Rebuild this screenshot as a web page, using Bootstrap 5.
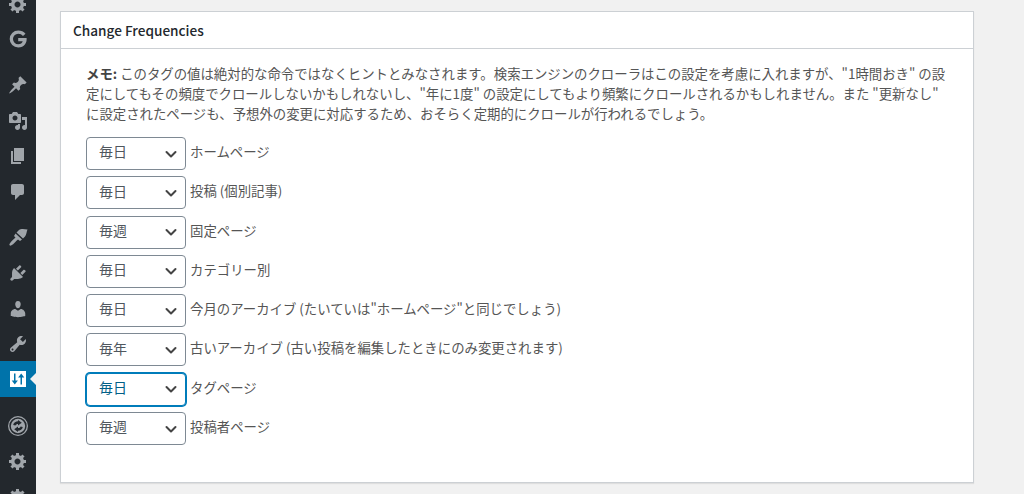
<!DOCTYPE html>
<html lang="ja">
<head>
  <meta charset="UTF-8" />
  <meta name="viewport" content="width=device-width, initial-scale=1.0" />
  <title>Change Frequencies</title>
  <link href="https://cdn.jsdelivr.net/npm/bootstrap@5.3.0/dist/css/bootstrap.min.css" rel="stylesheet" />
  <style>
    html, body { height: 100%; }
    body {
      background-color: #f1f1f1;
      color: #555;
      font-family: "Noto Sans CJK JP", "Noto Sans", sans-serif;
      font-size: 13px;
      overflow: hidden;
    }
    .wp-shell { height: 494px; overflow: hidden; }
    .wp-side {
      width: 36px;
      flex: none;
      background: #23282d;
      overflow: hidden;
    }
    .wp-menu { margin-top: -14px; }
    .wp-item {
      height: 35.6px;
      display: flex;
      align-items: center;
      justify-content: center;
      color: #a0a5aa;
    }
    .wp-item svg { width: 20px; height: 20px; fill: currentColor; }
    .wp-gap { height: 10px; }
    .wp-item.is-on {
      height: 36px;
      margin-top: -1px;
      margin-bottom: 1px;
      background: #0073aa;
      color: #fff;
      position: relative;
    }
    .wp-item.is-on::after {
      content: "";
      position: absolute;
      right: 0;
      top: 12px;
      border: 6px solid transparent;
      border-right-color: #f1f1f1;
      border-left-width: 0;
    }
    .wp-main { padding: 11px 50px 0 24px; flex: 1; min-width: 0; }
    .fq-panel {
      height: 472px;
      background: #fff;
      border: 1px solid #ccd0d4;
      box-shadow: 0 1px 1px rgba(0, 0, 0, .08);
    }
    .fq-head {
      height: 37px;
      margin: 0;
      padding: 2px 12px 0;
      display: flex;
      align-items: center;
      border-bottom: 1px solid #ccd0d4;
      font-size: 13.6px;
      font-weight: 500;
      color: #23282d;
      line-height: 1;
    }
    .fq-body { padding: 16px 25px 0; }
    .fq-note { margin: -2px 0 14px; font-size: 13.4px; line-height: 20px; color: #555; }
    .fq-note strong { font-weight: 700; color: #444; }
    .fq-row { height: 33px; margin-bottom: 6.3px; gap: 4px; }
    .fq-row label { margin-top: -5px; font-size: 13.4px; color: #555; }
    .fq-select.form-select {
      width: 100px;
      height: 33px;
      padding: 0 24px 3px 12px;
      font-size: 14px;
      line-height: 1.4;
      color: #50575e;
      border: 1px solid #7e8993;
      border-radius: 4px;
      background-position: right 6px center;
      background-size: 16px 16px;
      background-image: url("data:image/svg+xml,%3csvg xmlns='http://www.w3.org/2000/svg' viewBox='0 0 16 16'%3e%3cpath fill='none' stroke='%23444' stroke-linecap='round' stroke-linejoin='round' stroke-width='2' d='m3.500 6 4.500 4.500 4.500-4.500'/%3e%3c/svg%3e");
      box-shadow: none;
    }
    .fq-select.is-focus {
      color: #016087;
      border-color: #007cba;
      box-shadow: 0 0 0 1px #007cba;
    }
  </style>
</head>
<body>
  <div class="wp-shell d-flex">
    <nav class="wp-side">
      <div class="wp-menu">
        <div class="wp-item"><svg viewBox="0 0 20 20"><path d="M18 12h-2.180c-.17.7-.44 1.350-.81 1.930l1.540 1.540-2.100 2.100-1.540-1.540c-.58.36-1.230.63-1.910.79V19H8v-2.180c-.68-.16-1.330-.43-1.910-.79l-1.540 1.540-2.120-2.120 1.540-1.540c-.36-.58-.63-1.230-.79-1.910H1V9h2.170c.16-.7.440-1.350.8-1.940L2.430 5.520l2.100-2.100 1.540 1.540c.58-.37 1.240-.64 1.930-.81V2h3v2.180c.68.16 1.330.43 1.910.79l1.540-1.540 2.120 2.120-1.540 1.540c.36.59.640 1.240.8 1.910H18v3zm-8.500 1.500c1.660 0 3-1.340 3-3s-1.340-3-3-3-3 1.340-3 3 1.340 3 3 3z"/></svg></div>
        <div class="wp-item"><svg viewBox="0 0 20 20"><path d="M17.500 4.700 15 7a6 6 0 0 0-4.800-2.200 5.200 5.200 0 0 0 0 10.400c2.400 0 4-1.100 4.500-3h-4.500V9h8.400c.6 4.800-2.300 9.500-8.400 9.500a8.500 8.500 0 1 1 0-17c3 0 5.500 1.200 7.300 3.200z"/></svg></div>
        <div class="wp-gap"></div>
        <div class="wp-item"><svg viewBox="0 0 20 20"><path d="M10.440 3.020l1.820-1.820 6.360 6.350-1.830 1.820c-1.050-.68-2.480-.57-3.410.36l-.75.75c-.92.93-1.040 2.350-.35 3.410l-1.830 1.820-2.410-2.410-2.800 2.790c-.42.42-3.380 2.710-3.800 2.290s1.860-3.390 2.280-3.810l2.790-2.790L4.100 9.360l1.830-1.820c1.050.69 2.480.57 3.400-.36l.75-.75c.93-.92 1.050-2.350.36-3.410z"/></svg></div>
        <div class="wp-item"><svg viewBox="0 0 20 20"><path d="M13 11V4c0-.55-.45-1-1-1h-1.670L9 1H5L3.670 3H2c-.55 0-1 .45-1 1v7c0 .55.45 1 1 1h10c.55 0 1-.45 1-1zM7 4.500c1.380 0 2.500 1.120 2.500 2.500S8.380 9.500 7 9.500 4.500 8.380 4.500 7 5.620 4.500 7 4.500zM14 6h5v10.500c0 1.380-1.120 2.500-2.500 2.500S14 17.880 14 16.500s1.120-2.500 2.500-2.500c.17 0 .34.020.5.050V9h-3V6zm-4 8.050V13h2v3.500c0 1.380-1.120 2.500-2.500 2.500S7 17.880 7 16.500 8.120 14 9.500 14c.17 0 .34.020.5.050z"/></svg></div>
        <div class="wp-item"><svg viewBox="0 0 20 20"><path d="M6 15V2h10v13H6zm-1 1h8v2H3V5h2v11z"/></svg></div>
        <div class="wp-item"><svg viewBox="0 0 20 20"><path d="M5 2h9c1.100 0 2 .9 2 2v7c0 1.100-.9 2-2 2h-2l-5 5v-5H5c-1.100 0-2-.9-2-2V4c0-1.100.9-2 2-2z"/></svg></div>
        <div class="wp-gap"></div>
        <div class="wp-item"><svg viewBox="0 0 20 20"><path d="M11 3C13 1.500 16 2 19.500 2.500 18.500 5 18.500 7.500 17 9.500L15 11.500 8.500 5.500zM7.500 6.500 14 12.500 12 14 10 12.500C8 14 6 17 3 18.500 2 19 1 18 1.500 17 3 14 6 12 7.500 10.500L6 9z"/></svg></div>
        <div class="wp-item"><svg viewBox="0 0 20 20"><path d="M13.110 4.360L9.870 7.600 8 5.730l3.240-3.240c.35-.34 1.050-.2 1.560.32.52.51.66 1.210.31 1.550zm-8 1.770l.91-1.120 9.010 9.010-1.190.84c-.71.71-2.630 1.160-3.820 1.160H6.140L4.900 17.260c-.59.59-1.540.59-2.120 0-.59-.58-.59-1.530 0-2.120l1.240-1.240v-3.880c0-1.130.4-3.190 1.090-3.890zm7.260 3.970l3.240-3.240c.34-.35 1.040-.21 1.550.31.52.51.66 1.210.31 1.550l-3.240 3.250z"/></svg></div>
        <div class="wp-item"><svg viewBox="0 0 20 20"><path d="M10 9.250c-2.270 0-2.730-3.440-2.730-3.440C7 4.020 7.820 2 9.970 2c2.160 0 2.980 2.020 2.710 3.810 0 0-.41 3.440-2.680 3.440zm0 2.570L12.720 10c2.390 0 4.520 2.330 4.520 4.530v2.490s-3.650 1.130-7.240 1.130c-3.650 0-7.240-1.130-7.240-1.130v-2.490c0-2.250 1.940-4.480 4.470-4.480z"/></svg></div>
        <div class="wp-item"><svg viewBox="0 0 20 20"><path d="M16.680 9.770c-1.340 1.340-3.300 1.670-4.950.99l-5.410 6.520c-.99.99-2.590.99-3.580 0s-.99-2.590 0-3.570l6.520-5.420c-.68-1.650-.35-3.610.99-4.950 1.280-1.280 3.120-1.620 4.720-1.060l-2.890 2.890 2.820 2.820 2.860-2.870c.53 1.580.18 3.390-1.080 4.650zM3.810 16.210c.4.39 1.040.39 1.430 0 .4-.4.4-1.040 0-1.430-.39-.4-1.030-.4-1.430 0-.39.39-.39 1.030 0 1.430z"/></svg></div>
        <div class="wp-item is-on"><svg viewBox="0 0 20 20"><path fill-rule="evenodd" d="M2 2h16v16H2zM6 4.500V11.500H3.700L6.800 15.500 9.900 11.500H7.500V4.500zM12.500 15.500h1.500V8.500h2.300L13.200 4.500 10.100 8.500h2.400z"/></svg></div>
        <div class="wp-gap"></div>
        <div class="wp-item"><svg viewBox="0 0 20 20"><path fill-rule="evenodd" d="M10 0a10 10 0 1 1 0 20 10 10 0 0 1 0-20zm0 1.300a8.700 8.700 0 1 0 0 17.400 8.700 8.700 0 0 0 0-17.400zM10 2.800a7.200 7.200 0 1 1 0 14.400 7.200 7.200 0 0 1 0-14.400zM5.200 9C5.700 6.500 7.800 5.300 10 5.300V4l3.800 2.700L10 9.400V8C8.800 8 7.800 8.600 7.400 9.600zM14.800 11C14.300 13.500 12.200 14.700 10 14.700V16L6.200 13.300 10 10.600V12C11.200 12 12.200 11.400 12.600 10.400z"/></svg></div>
        <div class="wp-item"><svg viewBox="0 0 20 20"><path d="M18 12h-2.180c-.17.7-.44 1.350-.81 1.930l1.540 1.540-2.100 2.100-1.540-1.540c-.58.36-1.230.63-1.910.79V19H8v-2.180c-.68-.16-1.330-.43-1.910-.79l-1.540 1.540-2.120-2.120 1.540-1.540c-.36-.58-.63-1.230-.79-1.910H1V9h2.170c.16-.7.440-1.350.8-1.940L2.430 5.520l2.100-2.100 1.540 1.540c.58-.37 1.240-.64 1.930-.81V2h3v2.180c.68.16 1.330.43 1.910.79l1.540-1.540 2.120 2.120-1.540 1.540c.36.59.640 1.240.8 1.910H18v3zm-8.500 1.500c1.660 0 3-1.340 3-3s-1.340-3-3-3-3 1.340-3 3 1.340 3 3 3z"/></svg></div>
        <div class="wp-item"><svg viewBox="0 0 20 20"><path d="M18 12h-2.180c-.17.7-.44 1.350-.81 1.930l1.540 1.540-2.100 2.100-1.540-1.540c-.58.36-1.230.63-1.910.79V19H8v-2.180c-.68-.16-1.330-.43-1.910-.79l-1.540 1.540-2.120-2.120 1.540-1.540c-.36-.58-.63-1.230-.79-1.910H1V9h2.170c.16-.7.440-1.350.8-1.940L2.430 5.520l2.100-2.100 1.540 1.540c.58-.37 1.240-.64 1.930-.81V2h3v2.180c.68.16 1.330.43 1.910.79l1.540-1.540 2.120 2.120-1.540 1.540c.36.59.640 1.240.8 1.910H18v3zm-8.500 1.500c1.660 0 3-1.340 3-3s-1.340-3-3-3-3 1.340-3 3 1.340 3 3 3z"/></svg></div>
      </div>
    </nav>
    <main class="wp-main">
      <section class="fq-panel">
        <h2 class="fq-head">Change Frequencies</h2>
        <div class="fq-body">
          <p class="fq-note"><strong>メモ:</strong> このタグの値は絶対的な命令ではなくヒントとみなされます。検索エンジンのクローラはこの設定を考慮に入れますが、"1時間おき" の設定にしてもその頻度でクロールしないかもしれないし、"年に1度" の設定にしてもより頻繁にクロールされるかもしれません。また "更新なし" に設定されたページも、予想外の変更に対応するため、おそらく定期的にクロールが行われるでしょう。</p>
          <div class="fq-row d-flex align-items-center">
            <select class="form-select fq-select"><option>毎日</option></select><label>ホームページ</label>
          </div>
          <div class="fq-row d-flex align-items-center">
            <select class="form-select fq-select"><option>毎日</option></select><label>投稿 (個別記事)</label>
          </div>
          <div class="fq-row d-flex align-items-center">
            <select class="form-select fq-select"><option>毎週</option></select><label>固定ページ</label>
          </div>
          <div class="fq-row d-flex align-items-center">
            <select class="form-select fq-select"><option>毎日</option></select><label>カテゴリー別</label>
          </div>
          <div class="fq-row d-flex align-items-center">
            <select class="form-select fq-select"><option>毎日</option></select><label>今月のアーカイブ (たいていは"ホームページ"と同じでしょう)</label>
          </div>
          <div class="fq-row d-flex align-items-center">
            <select class="form-select fq-select"><option>毎年</option></select><label>古いアーカイブ (古い投稿を編集したときにのみ変更されます)</label>
          </div>
          <div class="fq-row d-flex align-items-center">
            <select class="form-select fq-select is-focus"><option>毎日</option></select><label>タグページ</label>
          </div>
          <div class="fq-row d-flex align-items-center">
            <select class="form-select fq-select"><option>毎週</option></select><label>投稿者ページ</label>
          </div>
        </div>
      </section>
    </main>
  </div>
  <script src="https://cdn.jsdelivr.net/npm/bootstrap@5.3.0/dist/js/bootstrap.bundle.min.js"></script>
</body>
</html>
